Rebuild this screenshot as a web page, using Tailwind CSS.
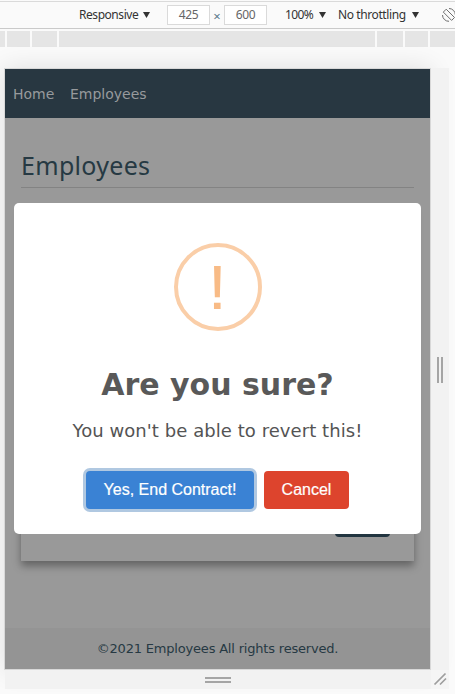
<!DOCTYPE html>
<html lang="en">
<head>
<meta charset="utf-8">
<title>Employees</title>
<script src="https://cdn.jsdelivr.net/npm/@tailwindcss/browser@4"></script>
</head>
<body class="h-[694px] w-[455px] overflow-hidden bg-[#fafafa] font-['DejaVu_Sans',sans-serif]">
<!-- Device toolbar -->
<div class="mt-px flex h-[28px] items-center overflow-hidden border-y border-t-[#dadada] border-b-[#cacaca] bg-[#fafafa] pl-[79px] font-['Noto_Sans',sans-serif] text-[12px] whitespace-nowrap text-[#333]">
  <span class="w-[64px] shrink-0 tracking-[-0.45px]">Responsive</span>
  <svg class="h-[6px] w-[7px] shrink-0" viewBox="0 0 7 6"><path d="M0 0h7L3.5 6z" fill="#333"/></svg>
  <span class="ml-[17px] flex h-5 w-[43px] shrink-0 items-center justify-center border border-[#dadada] bg-white tracking-[-0.4px] text-[#666]">425</span>
  <span class="w-[14px] shrink-0 pt-[3px] text-center text-[13px] text-[#5a7a8a]">×</span>
  <span class="flex h-5 w-[43px] shrink-0 items-center justify-center border border-[#dadada] bg-white tracking-[-0.4px] text-[#666]">600</span>
  <span class="ml-[18px] w-[34px] shrink-0 tracking-[-0.6px]">100%</span>
  <svg class="h-[6px] w-[7px] shrink-0" viewBox="0 0 7 6"><path d="M0 0h7L3.5 6z" fill="#333"/></svg>
  <span class="ml-[12px] w-[74px] shrink-0 tracking-[-0.4px]">No throttling</span>
  <svg class="h-[6px] w-[7px] shrink-0" viewBox="0 0 7 6"><path d="M0 0h7L3.5 6z" fill="#333"/></svg>
  <svg class="ml-[22px] h-[16px] w-[16px] shrink-0" viewBox="0 0 16 16" fill="none" stroke="#6e6e6e"><path d="M5.2 2.2 13.5 10.5 10.6 13.4 2.3 5.1z"/><path d="M8 1.5a6.3 6.3 0 0 1 6.3 6.3M8 14.3A6.3 6.3 0 0 1 1.5 8"/></svg>
</div>
<!-- Breakpoint ruler -->
<div class="mt-[2px] flex h-4 gap-[2px] bg-[#fafafa] *:bg-[#e5e5e5]">
  <i class="w-[5px]"></i><i class="w-[23px]"></i><i class="w-[25px]"></i><i class="w-[316px]"></i><i class="w-[26px]"></i><i class="w-[23px]"></i><i class="w-[25px]"></i>
</div>
<div class="grid grid-cols-[427px_18px] grid-rows-[602px_19px] pt-[21px] pl-1">
  <!-- Emulated viewport -->
  <div class="relative flex flex-col border border-[#d8d8d8] bg-[#999] shadow-[0_0_24px_#0000001c]">
    <nav class="flex h-[49px] items-center gap-[15px] bg-[#283741] px-2 pt-px text-[14px] text-[#979a9d]">
      <a class="w-[42px]">Home</a><a>Employees</a>
    </nav>
    <main class="flex h-[510px] flex-col px-4">
      <h1 class="mt-[28px] h-[42px] border-b border-[#838383] font-['Noto_Sans',sans-serif] text-[25px] leading-[38px] tracking-[0.3px] text-[#263943]">Employees</h1>
      <section class="mt-[20px] flex h-[353px] items-end justify-end bg-[#999] pr-6 pb-[24px] shadow-[0_5px_8px_#0000005a]">
        <span class="h-[38px] w-[55px] rounded bg-[#223540]"></span>
      </section>
    </main>
    <footer class="h-[41px] bg-[#949494] text-center text-[13px] leading-[41px] tracking-[-0.19px] text-[#263943]">©2021 Employees All rights reserved.</footer>
    <!-- Confirmation dialog -->
    <div role="dialog" class="absolute top-[134px] left-[9px] flex h-[331px] w-[407px] flex-col items-center rounded-[5px] bg-white pt-10">
      <div class="flex h-[88px] w-[88px] shrink-0 items-center justify-center rounded-full border-4 border-[#facea8] font-['Liberation_Sans',sans-serif] text-[60px] leading-[80px] text-[#f8bb86]"><span class="relative top-px scale-x-115 scale-y-106">!</span></div>
      <h2 class="mt-[32px] text-[30px] leading-[44px] font-bold text-[#595959]">Are you sure?</h2>
      <p class="mt-[10px] text-[18px] leading-[28px] tracking-[0.06px] text-[#545454]">You won't be able to revert this!</p>
      <div class="mt-[26px] flex gap-[10px] font-['Liberation_Sans',sans-serif] text-[16px] leading-[38px] text-white">
        <button class="h-[38px] w-[168px] rounded-[4px] bg-[#3a82d4] shadow-[0_0_0_3px_#b0c8e1] [-webkit-text-stroke:0.2px_white]">Yes, End Contract!</button>
        <button class="h-[38px] w-[85px] rounded-[4px] bg-[#dd442d] [-webkit-text-stroke:0.2px_white]">Cancel</button>
      </div>
    </div>
  </div>
  <!-- Resize handles -->
  <div class="relative flex items-center justify-center gap-[2px] bg-[#f2f2f2] pt-[2px]"><i class="h-[26px] w-[2px] bg-[#a5a5a5]"></i><i class="h-[26px] w-[2px] bg-[#a5a5a5]"></i></div>
  <div class="relative ml-px flex flex-col items-center justify-center gap-[2px] bg-[#f2f2f2]"><i class="h-[2px] w-[26px] bg-[#a5a5a5]"></i><i class="h-[2px] w-[26px] bg-[#a5a5a5]"></i></div>
  <div class="relative bg-[#f5f5f5]"><svg class="h-[19px] w-[18px]" viewBox="0 0 18 19" fill="none" stroke="#9e9e9e" stroke-width="1.7"><path d="M3.5 14.5 14.5 3.5M9 14.5 15 8.5"/></svg></div>
</div>
</body>
</html>
